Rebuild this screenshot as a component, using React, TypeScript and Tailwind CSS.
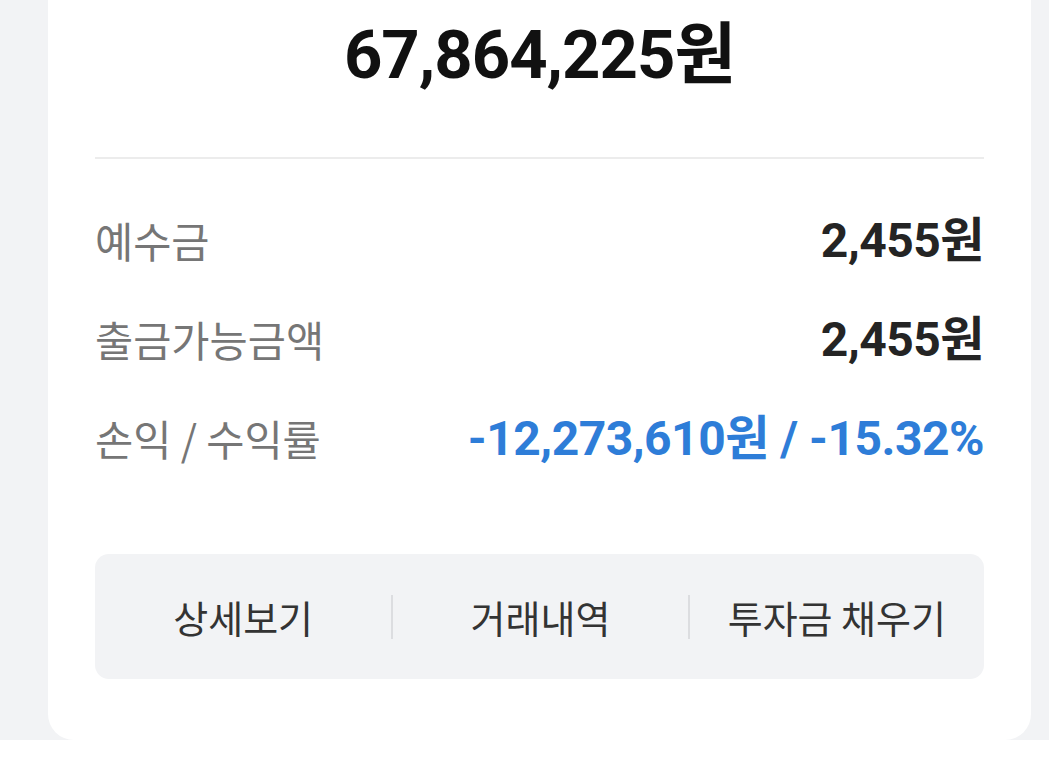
import React from "react";

const KR = "font-['Noto_Sans_CJK_KR',sans-serif]";
const NUM = "font-['Roboto','Noto_Sans_CJK_KR',sans-serif]";

function Row({ label, value, blue }: { label: string; value: string; blue?: boolean }) {
  return (
    <div className="flex h-[99px] items-center justify-between">
      <span className={`${KR} text-[41.5px] leading-none text-[#767676]`}>{label}</span>
      <span
        className={`${NUM} text-[48px] font-bold leading-none tracking-[-0.5px] ${
          blue ? "text-[#2e7dd8]" : "text-[#242424]"
        }`}
      >
        {value}
      </span>
    </div>
  );
}

export default function App() {
  return (
    <div className="flex h-[767px] w-[1049px] flex-col bg-white">
      <div className="flex h-[740px] bg-[#f2f3f5] pl-[48px] pr-[18px]">
        <div className="flex flex-1 flex-col rounded-b-[26px] bg-white px-[47px]">
          <div className="flex h-[157px] items-start justify-center pt-[22px]">
            <span className={`${NUM} text-[67px] font-bold leading-none tracking-[-1px] text-[#111111]`}>
              67,864,225원
            </span>
          </div>
          <div className="h-[2px] bg-[#ececec]" />
          <div className="mt-[32px] flex flex-col">
            <Row label="예수금" value="2,455원" />
            <Row label="출금가능금액" value="2,455원" />
            <Row label="손익 / 수익률" value="-12,273,610원 / -15.32%" blue />
          </div>
          <div className="mt-[66px] grid h-[125px] grid-cols-3 items-center rounded-[14px] bg-[#f2f3f5]">
            {["상세보기", "거래내역", "투자금 채우기"].map((t, i) => (
              <div
                key={t}
                className={`flex h-[44px] items-center justify-center ${
                  i > 0 ? "border-l-2 border-[#dcdde0]" : ""
                }`}
              >
                <span className={`${KR} text-[38px] leading-none text-[#333333]`}>{t}</span>
              </div>
            ))}
          </div>
        </div>
      </div>
    </div>
  );
}
